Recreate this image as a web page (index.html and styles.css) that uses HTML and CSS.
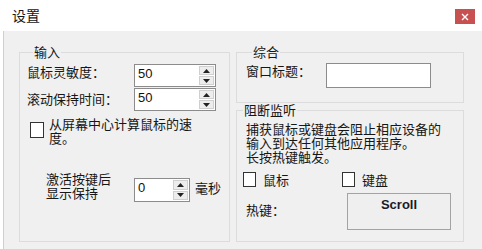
FILE: index.html
```html
<!DOCTYPE html>
<html lang="zh-CN">
<head>
<meta charset="utf-8">
<title>设置</title>
<link rel="stylesheet" href="styles.css">
</head>
<body>
<div class="window">
  <div class="titlebar">
    <span class="title">设置</span>
    <span class="close"><svg width="8" height="8" viewBox="0 0 8 8"><path d="M1 1L7 7M7 1L1 7" stroke="#fff" stroke-width="1.4"/></svg></span>
  </div>
  <div class="client">
    <div class="columns">
      <fieldset class="group group-input">
        <legend>输入</legend>
        <div class="row row-sens">
          <span class="lbl">鼠标灵敏度：</span>
          <div class="spin spin-wide">
            <span class="spin-val">50</span>
            <span class="spin-btns">
              <span class="spin-btn"><svg width="7" height="4" viewBox="0 0 7 4"><path d="M3.5 0L7 4H0Z" fill="#222"/></svg></span>
              <span class="spin-btn"><svg width="7" height="4" viewBox="0 0 7 4"><path d="M0 0H7L3.5 4Z" fill="#222"/></svg></span>
            </span>
          </div>
        </div>
        <div class="row row-scroll">
          <span class="lbl lbl-scroll">滚动保持时间：</span>
          <div class="spin spin-wide">
            <span class="spin-val">50</span>
            <span class="spin-btns">
              <span class="spin-btn"><svg width="7" height="4" viewBox="0 0 7 4"><path d="M3.5 0L7 4H0Z" fill="#222"/></svg></span>
              <span class="spin-btn"><svg width="7" height="4" viewBox="0 0 7 4"><path d="M0 0H7L3.5 4Z" fill="#222"/></svg></span>
            </span>
          </div>
        </div>
        <div class="row row-center">
          <span class="checkbox cb-center"></span>
          <span class="center-text">从屏幕中心计算鼠标的速度。</span>
        </div>
        <div class="row row-hold">
          <span class="hold-text">激活按键后显示保持</span>
          <div class="spin spin-small">
            <span class="spin-val">0</span>
            <span class="spin-btns">
              <span class="spin-btn"><svg width="7" height="4" viewBox="0 0 7 4"><path d="M3.5 0L7 4H0Z" fill="#222"/></svg></span>
              <span class="spin-btn"><svg width="7" height="4" viewBox="0 0 7 4"><path d="M0 0H7L3.5 4Z" fill="#222"/></svg></span>
            </span>
          </div>
          <span class="unit">毫秒</span>
        </div>
      </fieldset>
      <div class="col-right">
        <fieldset class="group group-general">
          <legend>综合</legend>
          <div class="row">
            <span class="lbl lbl-title">窗口标题：</span>
            <span class="textbox"></span>
          </div>
        </fieldset>
        <fieldset class="group group-block">
          <legend>阻断监听</legend>
          <div class="block-text">捕获鼠标或键盘会阻止相应设备的输入到达任何其他应用程序。
长按热键触发。</div>
          <div class="row check-row">
            <span class="chk-item"><span class="checkbox cb-small"></span><span class="chk-label">鼠标</span></span>
            <span class="chk-item"><span class="checkbox cb-small"></span><span class="chk-label">键盘</span></span>
          </div>
          <div class="row hotkey-row">
            <span class="lbl lbl-hotkey">热键：</span>
            <span class="hotkey-btn">Scroll</span>
          </div>
        </fieldset>
      </div>
    </div>
  </div>
</div>
</body>
</html>
```
FILE: styles.css
```css
html, body {
  margin: 0;
  padding: 0;
  background: #ffffff;
}

body {
  font-family: "Noto Sans CJK SC", "Noto Sans", sans-serif;
  font-size: 13px;
  color: #161616;
}

.window {
  width: 482px;
  height: 249px;
  overflow: hidden;
  display: flex;
  flex-direction: column;
}

.titlebar {
  height: 31px;
  box-sizing: border-box;
  display: flex;
  align-items: flex-start;
  padding: 7px 7px 0 12px;
  background: #ffffff;
}

.title {
  font-size: 14px;
  line-height: 16px;
}

.close {
  margin-left: auto;
  margin-top: 2px;
  width: 20px;
  height: 15px;
  background: #c75050;
  display: flex;
  align-items: center;
  justify-content: center;
}

.client {
  flex: 1;
  margin-left: 3px;
  border-left: 1px solid #cfcfcf;
  background: #f0f0f0;
  padding: 14px 0 0 15px;
}

.columns {
  display: flex;
  gap: 6px;
  height: 197px;
}

.group {
  margin: 0;
  border: 1px solid #dcdcdc;
  padding: 0;
  box-sizing: border-box;
  min-width: 0;
}

.group legend {
  font-size: 13px;
  line-height: 14px;
  padding: 0 1px;
  margin-left: 6px;
}

.group-input {
  width: 211px;
  padding: 5px 0 0 7px;
}

.col-right {
  width: 228px;
  display: flex;
  flex-direction: column;
}

.group-general {
  padding: 4px 0 14px 9px;
}

.group-block {
  flex: 1;
  padding: 5px 0 0 0;
}

.row {
  display: flex;
  align-items: flex-start;
}

.lbl {
  line-height: 15px;
  white-space: nowrap;
}

.row-sens .lbl,
.row-scroll .lbl {
  width: 107px;
}

.row-scroll {
  margin-top: 1px;
}

.lbl-scroll {
  margin-top: 3px;
}

.spin {
  display: flex;
  box-sizing: border-box;
  border: 1px solid #8c8c8c;
  background: #ffffff;
}

.spin-wide {
  width: 82px;
  height: 23px;
}

.spin-small {
  width: 56px;
  height: 24px;
  margin-left: 16px;
  margin-top: 6px;
}

.spin-val {
  flex: 1;
  font-family: "Liberation Sans", Arial, sans-serif;
  font-size: 13px;
  line-height: 15px;
  padding: 1px 0 0 3px;
  color: #111;
}

.spin-btns {
  width: 15px;
  display: flex;
  flex-direction: column;
  gap: 1px;
  margin: 1px 1px 1px 0;
}

.spin-btn {
  flex: 1;
  box-sizing: border-box;
  background: #ededed;
  border: 1px solid #cfcfcf;
  display: flex;
  align-items: center;
  justify-content: center;
}

.row-center {
  margin-top: 6px;
}

.checkbox {
  display: inline-block;
  box-sizing: border-box;
  border: 1px solid #333333;
  background: #ffffff;
  flex: none;
}

.cb-center {
  width: 14px;
  height: 16px;
  margin-left: 3px;
  margin-top: 5px;
}

.center-text {
  width: 150px;
  margin-left: 5px;
  line-height: 14px;
}

.row-hold {
  margin-top: 27px;
  margin-left: 19px;
}

.hold-text {
  width: 72px;
  line-height: 14px;
}

.unit {
  margin-left: 5px;
  margin-top: 8px;
  line-height: 15px;
}

.lbl-title {
  width: 80px;
}

.textbox {
  width: 105px;
  height: 25px;
  box-sizing: border-box;
  border: 1px solid #8c8c8c;
  background: #ffffff;
}

.block-text {
  margin-left: 9px;
  width: 205px;
  line-height: 14px;
  white-space: pre-line;
}

.check-row {
  margin-top: 8px;
  margin-left: 6px;
}

.chk-item {
  width: 99px;
  display: flex;
  align-items: flex-start;
}

.cb-small {
  width: 13px;
  height: 15px;
}

.chk-label {
  margin-left: 7px;
  line-height: 15px;
}

.hotkey-row {
  margin-top: 6px;
  margin-left: 9px;
}

.lbl-hotkey {
  width: 101px;
  margin-top: 9px;
}

.hotkey-btn {
  width: 104px;
  height: 37px;
  box-sizing: border-box;
  border: 1px solid #a3a3a3;
  background: #efefef;
  font-family: "Liberation Sans", Arial, sans-serif;
  font-weight: bold;
  font-size: 13px;
  line-height: 15px;
  padding-top: 3px;
  text-align: center;
  color: #1a1a2a;
}
```
